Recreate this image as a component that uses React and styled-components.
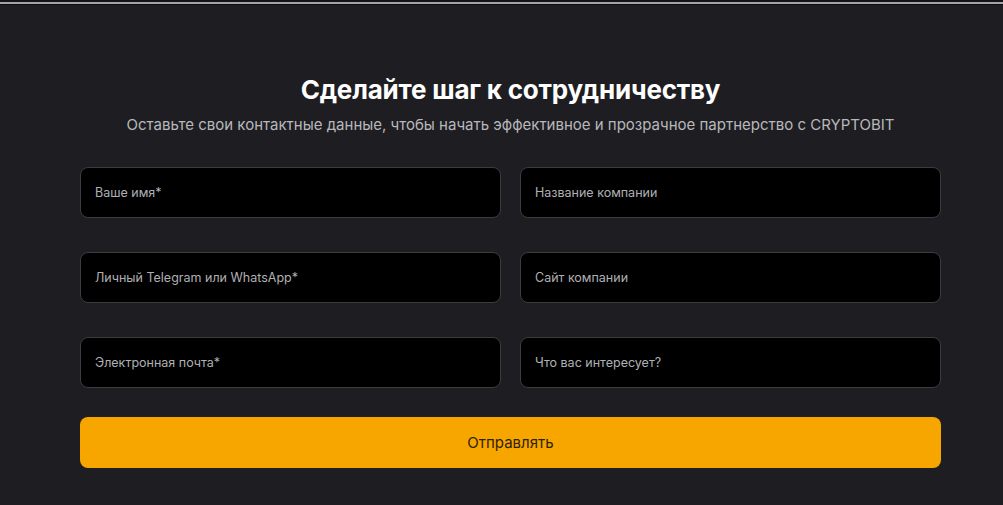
import styled, { createGlobalStyle } from "styled-components"

const GlobalStyle = createGlobalStyle`
  html, body {
    margin: 0;
    padding: 0;
    background: #1e1e22;
  }
  * {
    box-sizing: border-box;
  }
`

const Page = styled.div`
  width: 1003px;
  height: 505px;
  background: #1e1e22;
  font-family: Inter, "Noto Sans", sans-serif;
  border-top: 2px solid #141418;
  overflow: hidden;
`

const TopLine = styled.div`
  height: 2px;
  background: #a4a4a6;
  border-bottom: 1px solid #0e0e12;
  box-sizing: content-box;
`

const Section = styled.section`
  padding: 68px 62px 0 80px;
  display: flex;
  flex-direction: column;
  align-items: center;
`

const Title = styled.h2`
  margin: 0;
  font-size: 26px;
  font-weight: 700;
  color: #ffffff;
  letter-spacing: -0.2px;
  line-height: 34px;
`

const Subtitle = styled.p`
  margin: 8px 0 0;
  font-size: 15px;
  color: #b8b8bc;
  line-height: 20px;
`

const Form = styled.form`
  margin-top: 32px;
  width: 100%;
  display: grid;
  grid-template-columns: 1fr 1fr;
  column-gap: 19px;
  row-gap: 34px;
`

const Field = styled.input`
  height: 51px;
  width: 100%;
  background: #000000;
  border: 1px solid #3c3c40;
  border-radius: 8px;
  padding: 0 14px;
  font-family: inherit;
  font-size: 12.5px;
  color: #ffffff;
  outline: none;

  &::placeholder {
    color: #b0b0b4;
  }
`

const Submit = styled.button`
  grid-column: 1 / -1;
  margin-top: -5px;
  height: 51px;
  border: none;
  border-radius: 8px;
  background: #f7a600;
  color: #2e2308;
  font-family: inherit;
  font-size: 15px;
  cursor: pointer;
`

const fields = [
  "Ваше имя*",
  "Название компании",
  "Личный Telegram или WhatsApp*",
  "Сайт компании",
  "Электронная почта*",
  "Что вас интересует?",
]

const App = () => {
  return (
    <>
      <GlobalStyle />
      <Page>
        <TopLine />
        <Section>
          <Title>Сделайте шаг к сотрудничеству</Title>
          <Subtitle>
            Оставьте свои контактные данные, чтобы начать эффективное и прозрачное партнерство с CRYPTOBIT
          </Subtitle>
          <Form onSubmit={e => e.preventDefault()}>
            {fields.map(f => (
              <Field key={f} placeholder={f} />
            ))}
            <Submit type="submit">Отправлять</Submit>
          </Form>
        </Section>
      </Page>
    </>
  )
}

export default App
